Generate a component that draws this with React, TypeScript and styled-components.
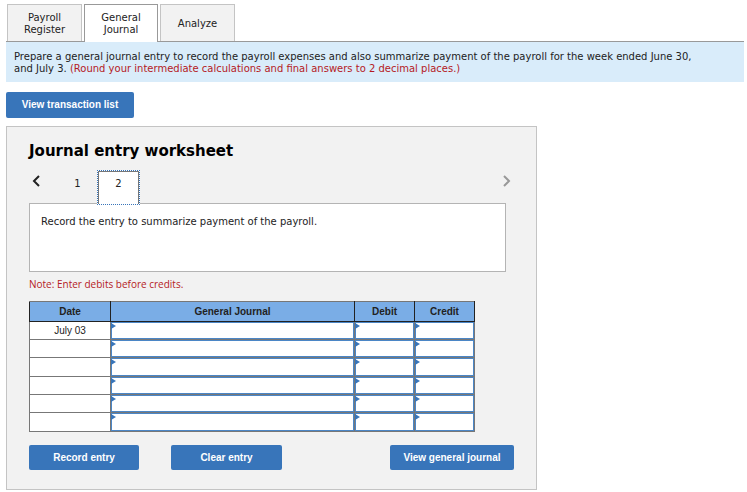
import React, { useState } from "react";
import styled, { createGlobalStyle } from "styled-components";

const verdana = `Verdana, "DejaVu Sans", sans-serif`;
const arial = `Arial, "Liberation Sans", sans-serif`;

const GlobalStyle = createGlobalStyle`
  * { box-sizing: border-box; }
  body { margin: 0; background: #fff; color: #222; font: 10px/12px ${verdana}; }
  button, input { font: inherit; color: inherit; }
`;

const Page = styled.main`
  padding: 4px 3px 2px 6px;
`;

const TabBar = styled.nav`
  display: flex;
  gap: 2px;
  padding-left: 1px;
  border-bottom: 1px solid #999;
`;

const Tab = styled.button<{ $active?: boolean }>`
  width: ${(p) => (p.$active ? 74 : 75)}px;
  height: ${(p) => (p.$active ? 38 : 37)}px;
  margin: 0 0 ${(p) => (p.$active ? -1 : 0)}px;
  padding: ${(p) => (p.$active ? 0 : 2)}px 8px 0;
  border: 1px solid ${(p) => (p.$active ? "#999" : "#c4c4c4")};
  border-bottom: 0;
  background: ${(p) => (p.$active ? "#fff" : "#f2f2f2")};
`;

const Prompt = styled.p`
  margin: 0 0 10px;
  min-height: 40px;
  padding: 9px 40px 7px 8px;
  background: #d9ecfa;
`;

const Emphasis = styled.span`
  color: #b51a24;
`;

const ActionButton = styled.button<{ $width: number; $tall?: boolean }>`
  width: ${(p) => p.$width}px;
  height: ${(p) => (p.$tall ? 26 : 25)}px;
  padding: 0;
  border: 0;
  border-radius: 2px;
  background: #3875ba;
  color: #fff;
  font: bold 10px/12px ${arial};
`;

const Panel = styled.section`
  max-width: 531px;
  margin-top: 8px;
  padding: 16px 22px 19px;
  border: 1px solid #c4c4c4;
  background: #f2f2f2;
`;

const Title = styled.h1`
  margin: 0 0 10px;
  color: #000;
  font: bold 15px/17px ${verdana};
`;

const Pager = styled.nav`
  display: flex;
  align-items: flex-start;
  margin-right: 8px;
`;

const Arrow = styled.button`
  display: flex;
  width: 13px;
  height: 22px;
  align-items: center;
  justify-content: center;
  padding: 0;
  border: 0;
  background: none;

  &:last-child { margin-left: auto; margin-right: -8px; width: 15px; }
`;

const Step = styled.button<{ $active?: boolean }>`
  width: ${(p) => (p.$active ? 43 : 39)}px;
  height: ${(p) => (p.$active ? 35 : 33)}px;
  margin: 0 0 ${(p) => (p.$active ? -2 : 0)}px ${(p) => (p.$active ? 0 : 16)}px;
  padding: 0 0 ${(p) => (p.$active ? 8 : 6)}px;
  border: 1px dotted ${(p) => (p.$active ? "#3875ba" : "transparent")};
  background: ${(p) => (p.$active ? "#fff" : "none")};
  box-shadow: ${(p) => (p.$active ? "inset 1px 1px #777, inset -1px 0 #777" : "none")};
  z-index: ${(p) => (p.$active ? 1 : 0)};
`;

const Instruction = styled.p`
  margin: 0 8px 6px 0;
  min-height: 69px;
  padding: 12px 11px;
  border: 1px solid #b4b4b4;
  background: #fff;
`;

const Note = styled.p`
  margin: 0 0 11px;
  color: #b51a24;
  font: 10px/12px "Open Sans", sans-serif;
`;

const Journal = styled.table`
  width: 446px;
  max-width: 100%;
  border-collapse: collapse;
  table-layout: fixed;
  border: 1px solid #777;
  background: #fff;
  font: 10px/12px ${arial};
`;

const HeadCell = styled.th<{ $width?: number }>`
  width: ${(p) => (p.$width ? `${p.$width}px` : "auto")};
  height: 20px;
  padding: 0;
  border: 1px solid #222;
  border-top-color: #777;
  background: #7aade6;
`;

const Row = styled.tr`
  height: 18px;
  &:nth-child(3n) { height: 19px; }
`;

const DateCell = styled.td`
  padding: 0;
  border: 1px solid #777;
  text-align: center;
`;

const EntryCell = styled.td`
  position: relative;
  padding: 0;
  border: 1px solid #777;

  &::before {
    content: "";
    position: absolute;
    top: 1px;
    left: 0;
    border-left: 5px solid #3875ba;
    border-top: 3px solid transparent;
    border-bottom: 3px solid transparent;
  }
`;

const EntryInput = styled.input`
  display: block;
  width: 100%;
  height: 17px;
  padding: 0 6px;
  border: 1px solid #4b86c6;
  border-radius: 0;
  background: #fff;

  ${Row}:nth-child(3n) & { height: 18px; }
`;

const Actions = styled.div`
  display: flex;
  gap: 32px;
  margin-top: 13px;

  & > :last-child { margin-left: auto; }
`;

const columns = ["General Journal", "Debit", "Credit"];
const dates = ["July 03", "", "", "", "", ""];

function Chevron({ next }: { next?: boolean }) {
  return (
    <svg width="10" height="14" viewBox="0 0 10 14" fill="none" aria-hidden="true">
      <path
        d={next ? "M2 2L7 7L2 12" : "M8 2L3 7L8 12"}
        stroke={next ? "#999" : "#222"}
        strokeWidth="2"
      />
    </svg>
  );
}

export default function App() {
  const [entries, setEntries] = useState<Record<string, string>>({});

  return (
    <>
      <GlobalStyle />
      <Page>
        <TabBar>
          <Tab>Payroll Register</Tab>
          <Tab $active>General Journal</Tab>
          <Tab>Analyze</Tab>
        </TabBar>
        <Prompt>
          Prepare a general journal entry to record the payroll expenses and also summarize payment of the
          payroll for the week ended June 30, and July 3.{" "}
          <Emphasis>(Round your intermediate calculations and final answers to 2 decimal places.)</Emphasis>
        </Prompt>
        <ActionButton $width={128} $tall>View transaction list</ActionButton>
        <Panel>
          <Title>Journal entry worksheet</Title>
          <Pager>
            <Arrow aria-label="Previous entry"><Chevron /></Arrow>
            <Step>1</Step>
            <Step $active>2</Step>
            <Arrow aria-label="Next entry"><Chevron next /></Arrow>
          </Pager>
          <Instruction>Record the entry to summarize payment of the payroll.</Instruction>
          <Note>Note: Enter debits before credits.</Note>
          <Journal>
            <thead>
              <tr>
                <HeadCell scope="col" $width={81}>Date</HeadCell>
                <HeadCell scope="col">General Journal</HeadCell>
                <HeadCell scope="col" $width={60}>Debit</HeadCell>
                <HeadCell scope="col" $width={60}>Credit</HeadCell>
              </tr>
            </thead>
            <tbody>
              {dates.map((date, row) => (
                <Row key={row}>
                  <DateCell>{date}</DateCell>
                  {columns.map((column) => {
                    const key = `${column}-${row}`;
                    return (
                      <EntryCell key={key}>
                        <EntryInput
                          aria-label={`${column}, line ${row + 1}`}
                          value={entries[key] ?? ""}
                          onChange={(e) => setEntries({ ...entries, [key]: e.target.value })}
                        />
                      </EntryCell>
                    );
                  })}
                </Row>
              ))}
            </tbody>
          </Journal>
          <Actions>
            <ActionButton $width={110}>Record entry</ActionButton>
            <ActionButton $width={111} onClick={() => setEntries({})}>Clear entry</ActionButton>
            <ActionButton $width={124}>View general journal</ActionButton>
          </Actions>
        </Panel>
      </Page>
    </>
  );
}
